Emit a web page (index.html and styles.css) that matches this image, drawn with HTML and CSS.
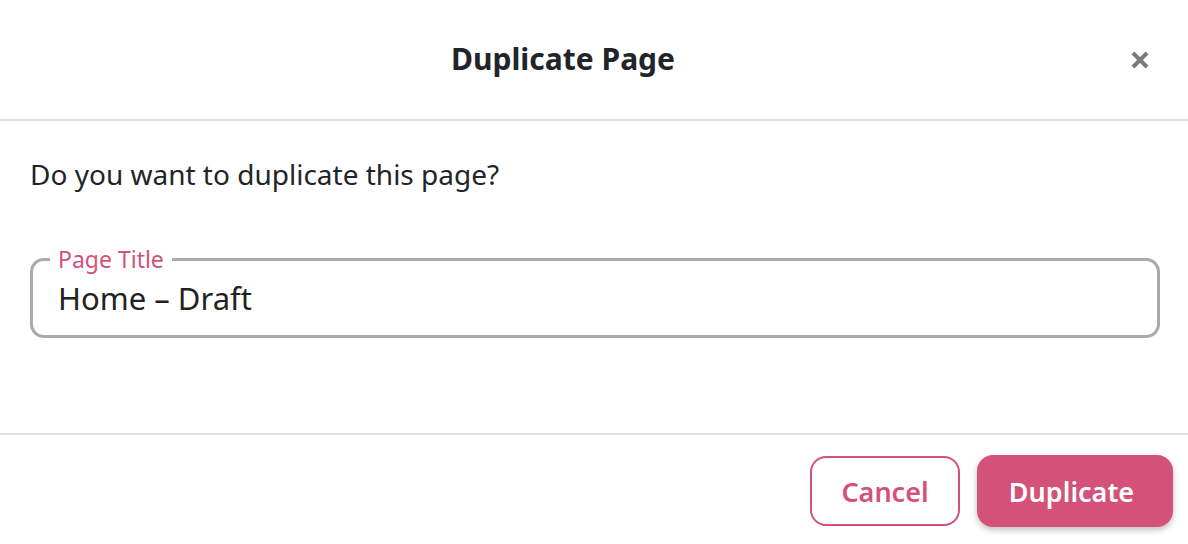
FILE: index.html
```html
<!DOCTYPE html>
<html lang="en">
<head>
<meta charset="utf-8">
<title>Duplicate Page</title>
<link rel="stylesheet" href="styles.css">
</head>
<body>
<div class="modal">
  <header class="modal-header">
    <h1 class="modal-title">Duplicate Page</h1>
    <button class="close" aria-label="Close">
      <svg width="20" height="20" viewBox="0 0 20 20"><path d="M3 3 L17 17 M17 3 L3 17" stroke="#7a7a7a" stroke-width="4" stroke-linecap="butt"/></svg>
    </button>
  </header>
  <main class="modal-body">
    <p class="question">Do you want to duplicate this page?</p>
    <fieldset class="field">
      <legend class="field-label">Page Title</legend>
      <div class="field-value">Home – Draft</div>
    </fieldset>
  </main>
  <footer class="modal-footer">
    <button class="btn btn-outline">Cancel</button>
    <button class="btn btn-primary">Duplicate</button>
  </footer>
</div>
</body>
</html>
```
FILE: styles.css
```css
* { box-sizing: border-box; }
html, body { margin: 0; padding: 0; background: #fff; }
body {
  font-family: "Noto Sans", "Open Sans", sans-serif;
  color: #212529;
  width: 1188px;
  height: 544px;
  overflow: hidden;
}
.modal { display: flex; flex-direction: column; height: 544px; }
.modal-header {
  height: 121px;
  flex: none;
  border-bottom: 2px solid #dee2e6;
  display: flex;
  align-items: center;
  justify-content: center;
  padding-right: 62px;
  position: relative;
}
.modal-title {
  margin: 0;
  font-size: 30px;
  font-weight: 700;
  line-height: 1;
  padding-bottom: 2px;
}
.close {
  position: absolute;
  right: 38px;
  top: 50px;
  border: 0;
  background: none;
  padding: 0;
  width: 20px;
  height: 20px;
  display: flex;
}
.modal-body {
  height: 314px;
  flex: none;
  border-bottom: 2px solid #dee2e6;
  padding: 33px 28px 0 30px;
}
.question {
  margin: 0;
  font-size: 28px;
  line-height: 40px;
}
.field {
  margin: 51px 0 0;
  border: 3px solid #aaaaaa;
  border-radius: 14px;
  padding: 0 16px 0 17px;
  height: 93px;
}
.field-label {
  color: #d4527a;
  font-size: 23px;
  line-height: 28px;
  padding: 0 8px;
}
.field-value {
  padding-left: 8px;
  font-size: 31px;
  line-height: 44px;
  margin-top: 3px;
  color: #222;
}
.modal-footer {
  flex: 1;
  display: flex;
  justify-content: flex-end;
  align-items: flex-start;
  gap: 17px;
  padding: 20px 15px 0 0;
}
.btn {
  font-family: inherit;
  font-size: 27px;
  font-weight: 600;
  border-radius: 16px;
  cursor: pointer;
}
.btn-outline {
  width: 150px;
  height: 70px;
  margin-top: 1px;
  border: 2px solid #d4527a;
  background: #fff;
  color: #d4527a;
}
.btn-primary {
  width: 196px;
  height: 72px;
  border: 0;
  padding: 0 7px 0 0;
  background: #d4527a;
  color: #fff;
  font-size: 27px;
  box-shadow: 0 3px 6px rgba(0,0,0,0.25);
}
```
